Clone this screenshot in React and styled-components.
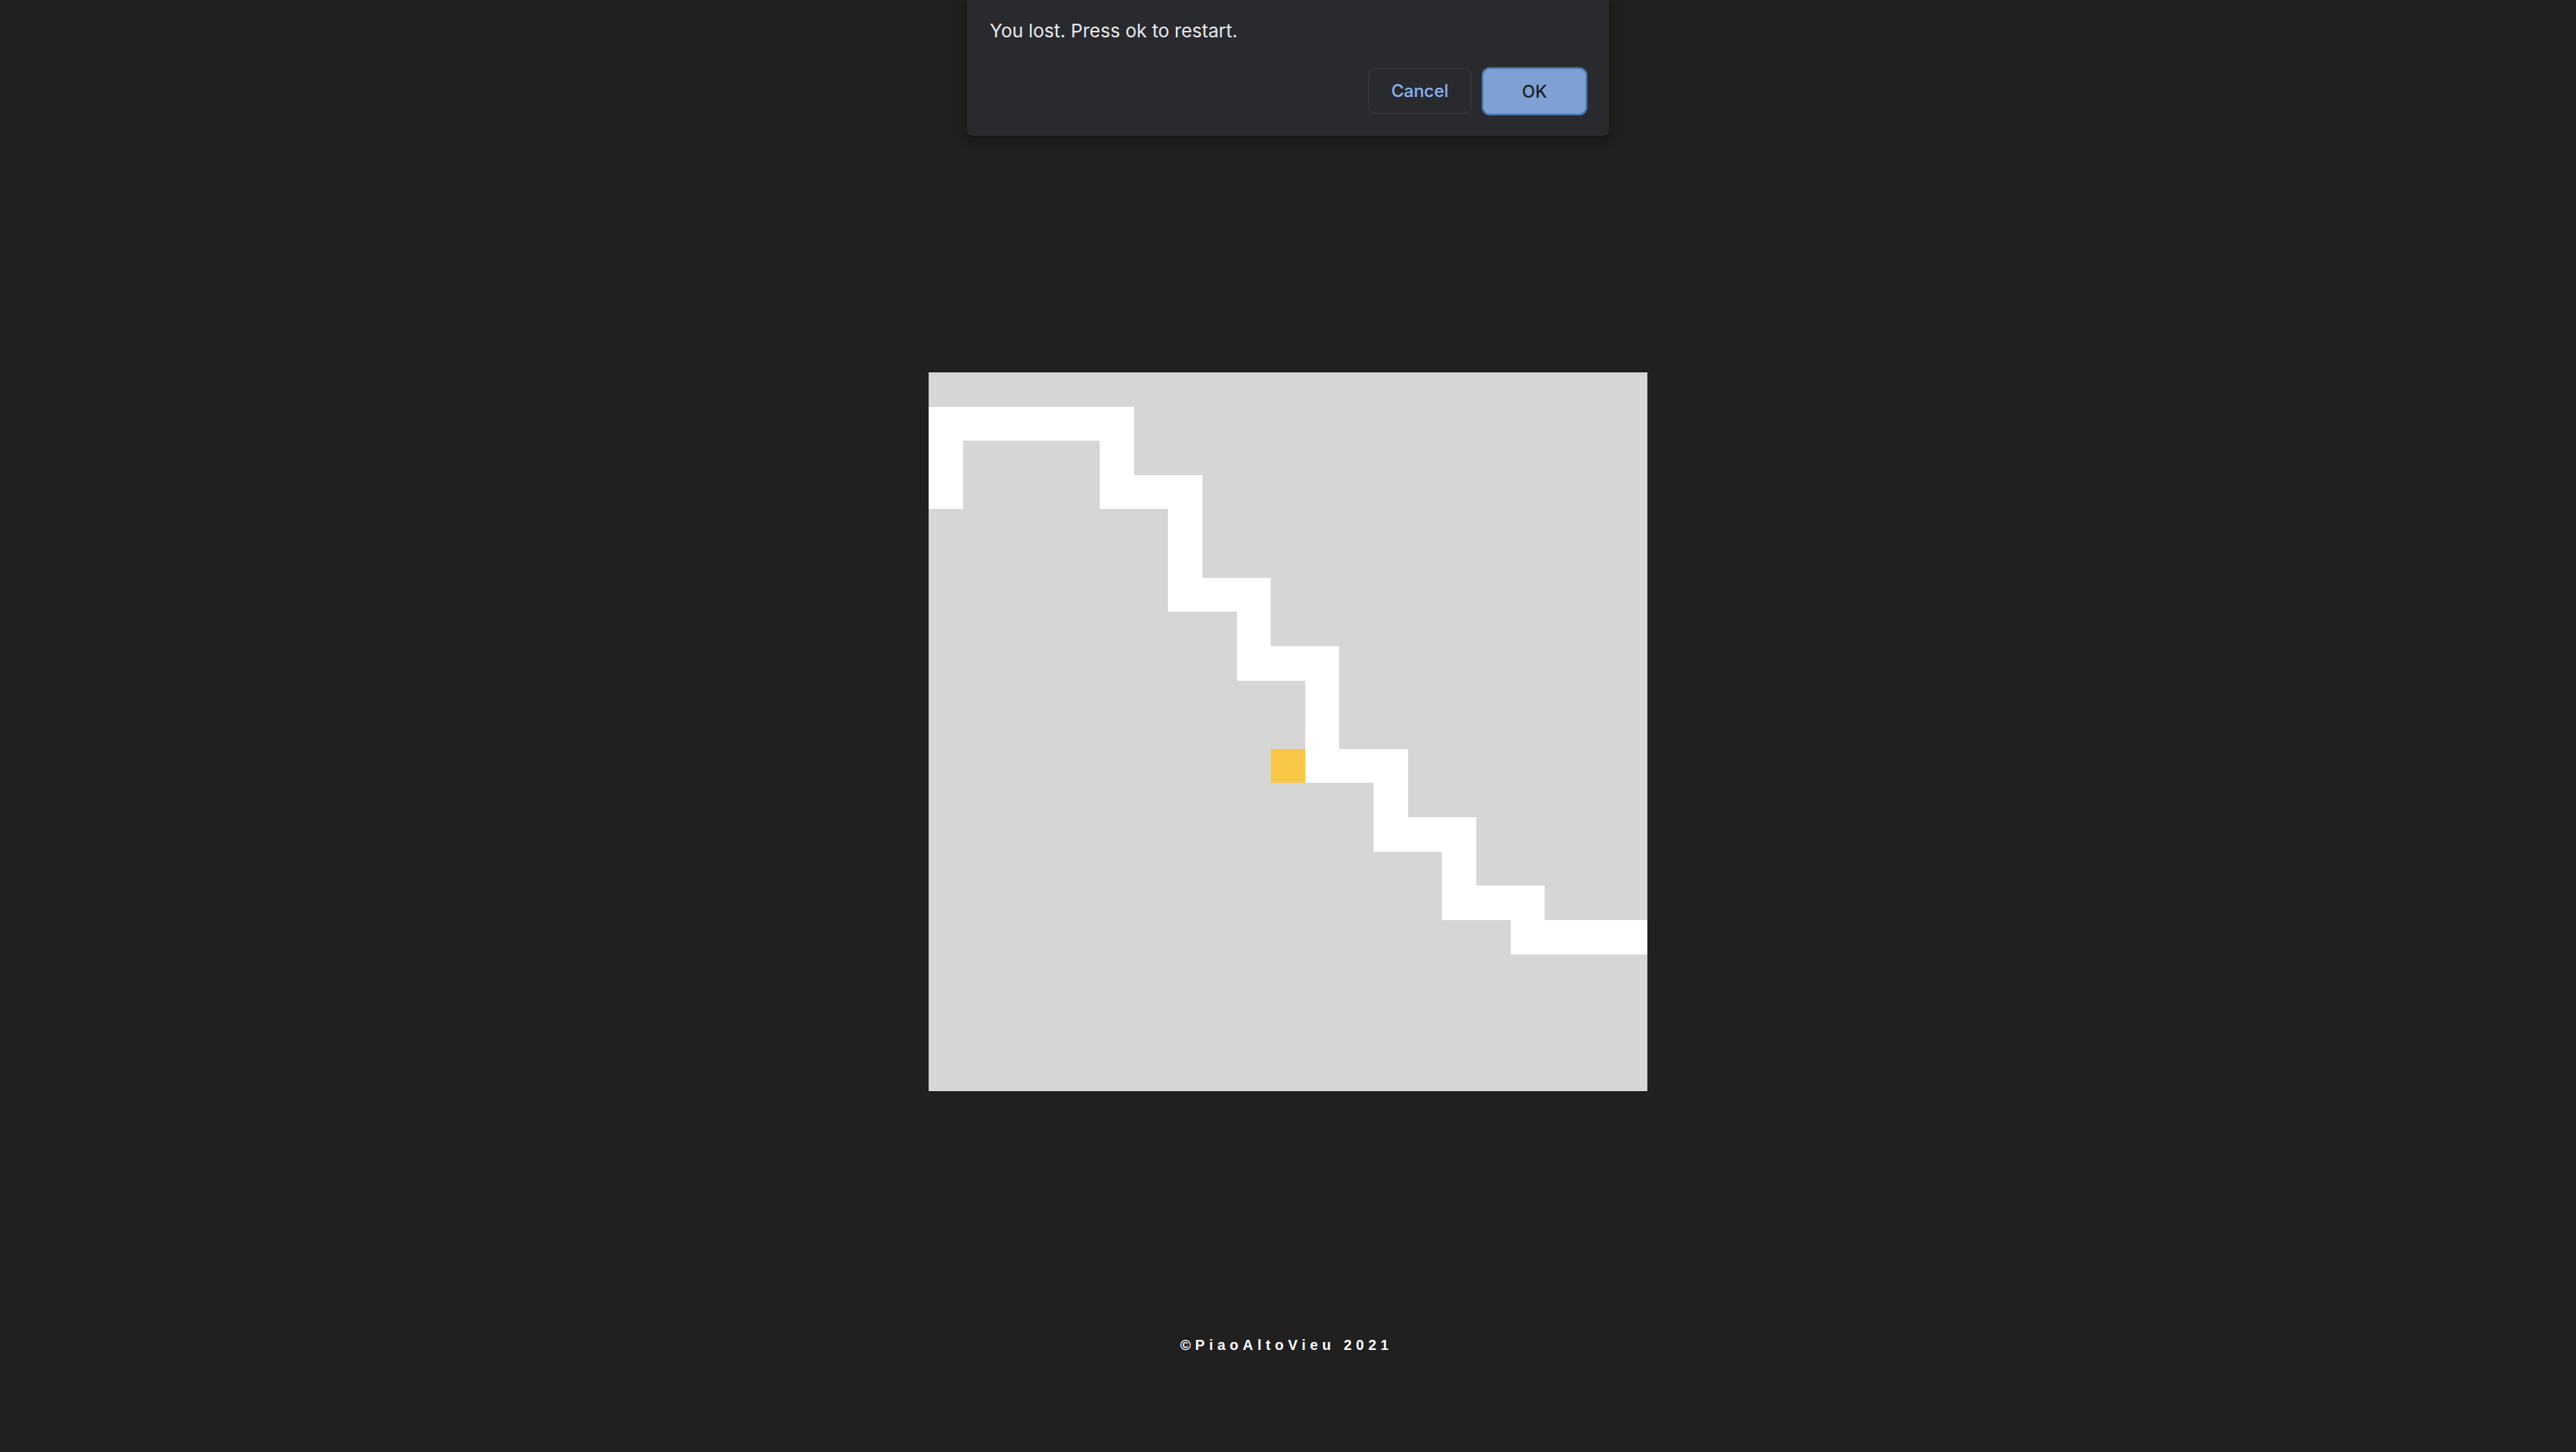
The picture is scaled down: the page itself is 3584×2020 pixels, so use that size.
import React from "react";
import styled, { createGlobalStyle } from "styled-components";

const Global = createGlobalStyle`
  html, body { margin: 0; padding: 0; background: #202020; }
  body { font-family: "Liberation Sans", Arial, sans-serif; }
`;

const Page = styled.div`
  position: relative;
  min-height: 2020px;
  display: flex;
  flex-direction: column;
  align-items: center;
  overflow: hidden;
`;

const Board = styled.div`
  margin-top: 518px;
  width: 1000px;
  height: 1000px;
  background: #d6d6d6;
  display: grid;
  grid-template-columns: repeat(21, 1fr);
  grid-template-rows: repeat(21, 1fr);
`;

const Block = styled.div`
  grid-column: ${(p) => p.$c1 + 1} / ${(p) => p.$c2 + 1};
  grid-row: ${(p) => p.$r1 + 1} / ${(p) => p.$r2 + 1};
  background: ${(p) => (p.$food ? "#f8c746" : "#ffffff")};
`;

const Footer = styled.footer`
  margin-top: 341px;
  font-family: "Liberation Sans", Arial, sans-serif;
  font-weight: 700;
  font-size: 20px;
  line-height: 24px;
  letter-spacing: 6px;
  color: #ffffff;
  margin-right: 4px;
`;

const Dialog = styled.div`
  position: absolute;
  top: -1px;
  left: 50%;
  margin-left: -448px;
  width: 896px;
  height: 191px;
  box-sizing: border-box;
  background: #292a2e;
  border: 1px solid #141414;
  border-radius: 0 0 10px 10px;
  box-shadow: 0 4px 14px rgba(0, 0, 0, 0.35);
  padding: 27px 32px 0 32px;
  display: flex;
  flex-direction: column;
  font-family: Inter, "Noto Sans", sans-serif;
`;

const Message = styled.div`
  font-size: 26px;
  line-height: 32px;
  color: #e8eaed;
`;

const Actions = styled.div`
  margin-top: 36px;
  display: flex;
  justify-content: flex-end;
  gap: 17px;
`;

const Button = styled.button`
  width: ${(p) => (p.$primary ? "142px" : "143px")};
  height: ${(p) => (p.$primary ? "62px" : "63px")};
  margin-top: ${(p) => (p.$primary ? "1px" : "0")};
  margin-right: ${(p) => (p.$primary ? "1px" : "0")};
  box-sizing: border-box;
  border-radius: 9px;
  font-family: Inter, "Noto Sans", sans-serif;
  font-size: 24px;
  font-weight: 500;
  cursor: pointer;
  border: ${(p) => (p.$primary ? "none" : "1.5px solid #3d3e42")};
  background: ${(p) => (p.$primary ? "#7ea0d5" : "transparent")};
  color: ${(p) => (p.$primary ? "#202124" : "#8ab4f8")};
  box-shadow: ${(p) => (p.$primary ? "0 0 0 2.5px #4b7db2" : "none")};
`;

const snake = [
  [0, 6, 1, 2],
  [0, 1, 1, 4],
  [5, 6, 1, 4],
  [5, 8, 3, 4],
  [7, 8, 3, 7],
  [7, 10, 6, 7],
  [9, 10, 6, 9],
  [9, 12, 8, 9],
  [11, 12, 8, 12],
  [11, 14, 11, 12],
  [13, 14, 11, 14],
  [13, 16, 13, 14],
  [15, 16, 13, 16],
  [15, 18, 15, 16],
  [17, 18, 15, 17],
  [17, 21, 16, 17],
];

export default function App() {
  return (
    <Page>
      <Global />
      <Board>
        {snake.map(([c1, c2, r1, r2], i) => (
          <Block key={i} $c1={c1} $c2={c2} $r1={r1} $r2={r2} />
        ))}
        <Block $food $c1={10} $c2={11} $r1={11} $r2={12} />
      </Board>
      <Footer>©PiaoAltoVieu 2021</Footer>
      <Dialog>
        <Message>You lost. Press ok to restart.</Message>
        <Actions>
          <Button>Cancel</Button>
          <Button $primary>OK</Button>
        </Actions>
      </Dialog>
    </Page>
  );
}
